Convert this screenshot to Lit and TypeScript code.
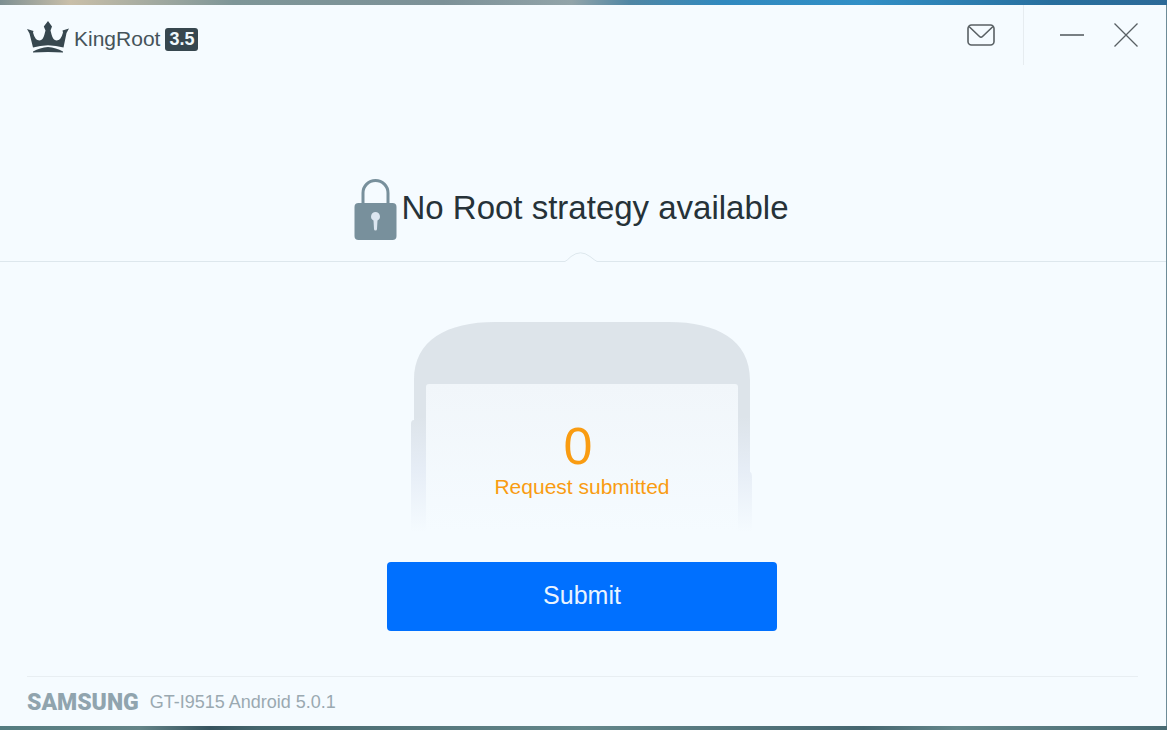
import { LitElement, html, css } from "lit";
import { customElement, property, state } from "lit/decorators.js";

@customElement("title-bar")
class TitleBar extends LitElement {
  @property() version = "";

  static styles = css`
    :host {
      display: flex;
      justify-content: space-between;
      align-items: flex-start;
      padding-left: 27px;
    }
    .brand {
      display: flex;
      align-items: center;
      gap: 5px;
      padding-top: 16px;
      color: #45535a;
      font-size: 21px;
      line-height: 36px;
    }
    .badge {
      width: 33px;
      border-radius: 3px;
      background: #37474f;
      color: #f0f8fc;
      font-size: 18px;
      font-weight: bold;
      line-height: 23px;
      text-align: center;
    }
    .controls {
      display: flex;
      height: 60px;
      padding-right: 20px;
    }
    .group {
      display: flex;
      gap: 14px;
    }
    .group + .group {
      border-left: 1px solid #e6ecf0;
      padding-left: 28px;
      margin-left: 22px;
    }
    button {
      display: grid;
      place-items: center;
      width: 40px;
      height: 60px;
      padding: 0;
      border: 0;
      background: none;
    }
    svg {
      display: block;
      fill: none;
      stroke: #596064;
    }
    .crown {
      fill: #37474f;
      stroke: none;
    }
  `;

  render() {
    return html`
      <div class="brand">
        <svg class="crown" width="42" height="36" viewBox="0 0 42 36" aria-hidden="true">
          <path d="M0 8 L6.500 10 L6 11.500 Q8 19.500 12.500 19.500 Q16 19 17.300 14 L18.500 9.500 L16.800 5.500 L21 0 L25 5.500 L23.500 9.500 L24.700 14 Q26 19 29.500 19.500 Q34 19.500 36 11.500 L35.500 9.500 L42 7.500 L39.500 12 L36.500 26.500 Q29 24.500 21 24.300 Q13 24.500 6 26.500 L2.500 12.500 Z"/>
          <path d="M6 31.500 L6 30.500 Q13 26.500 21 26 Q29 26.500 36 30.500 L36 31.500 Q21 30.500 6 31.500 Z"/>
        </svg>
        <span>KingRoot</span>
        <span class="badge">${this.version}</span>
      </div>
      <div class="controls">
        <div class="group">
          <button aria-label="Messages">
            <svg width="28" height="22" viewBox="0 0 28 22" stroke-width="1.6">
              <rect x="1" y="1" width="26" height="20" rx="3.500"/>
              <path d="M2 2.500 L12.500 12.500 Q14 14 15.500 12.500 L26 2.500"/>
            </svg>
          </button>
        </div>
        <div class="group">
          <button aria-label="Minimize">
            <svg width="26" height="26" viewBox="0 0 26 26" stroke-width="1.6"><path d="M1 13 H25"/></svg>
          </button>
          <button aria-label="Close">
            <svg width="26" height="26" viewBox="0 0 26 26" stroke-width="1.3"><path d="M1.500 1.500 L24.500 24.500 M24.500 1.500 L1.500 24.500"/></svg>
          </button>
        </div>
      </div>
    `;
  }
}

@customElement("root-status")
class RootStatus extends LitElement {
  @property() message = "";

  static styles = css`
    :host {
      display: block;
    }
    .headline {
      display: flex;
      justify-content: center;
      align-items: center;
      gap: 4px;
      padding: 114px 23px 12px 0;
    }
    h1 {
      margin: 0;
      padding-bottom: 4px;
      color: #263238;
      font-size: 33px;
      font-weight: normal;
      line-height: 40px;
    }
    .divider {
      display: flex;
    }
    .divider::before,
    .divider::after {
      content: "";
      flex: 1;
      border-bottom: 1px solid #dde7ed;
    }
    svg {
      display: block;
    }
  `;

  render() {
    return html`
      <div class="headline">
        <svg width="43" height="61" viewBox="0 0 43 61" aria-hidden="true">
          <path d="M9 26 V14 A12.500 12.500 0 0 1 34 14 V26" fill="none" stroke="#78909c" stroke-width="3"/>
          <rect x="0.500" y="24" width="42" height="37" rx="4" fill="#78909c"/>
          <path d="M21.500 33 a4.500 4.500 0 0 1 2 8.500 L23 50 a1.500 1.500 0 0 1 -3 0 L19.500 41.500 a4.500 4.500 0 0 1 2 -8.500 Z" fill="#dce6f0"/>
        </svg>
        <h1>${this.message}</h1>
      </div>
      <div class="divider">
        <svg width="38" height="10" viewBox="0 0 38 10" fill="none" stroke="#dde7ed" aria-hidden="true">
          <path d="M0 9.500 H1 Q3 8.500 7 4.500 Q12 0.800 16.500 0.800 Q21 0.800 26 4.500 Q31 8.500 33 9.500 H38"/>
        </svg>
      </div>
    `;
  }
}

@customElement("request-panel")
class RequestPanel extends LitElement {
  @state() private submitted = 0;

  static styles = css`
    :host {
      display: flex;
      flex-direction: column;
      align-items: center;
      gap: 30px;
      padding: 60px 2px 45px 0;
    }
    .phone {
      display: grid;
      justify-items: center;
    }
    .phone > * {
      grid-area: 1 / 1;
    }
    .counter {
      display: flex;
      flex-direction: column;
      align-items: center;
      padding-top: 97px;
      color: #f99c12;
      font-size: 21px;
      line-height: 28px;
    }
    .number {
      padding-right: 8px;
      font-size: 52px;
      line-height: 54px;
    }
    .submit {
      width: 390px;
      max-width: 100%;
      height: 69px;
      padding: 0 0 2px;
      border: 0;
      border-radius: 4px;
      background: #0070ff;
      color: #e9f4ff;
      font: 25px "Liberation Sans", Arial, sans-serif;
    }
  `;

  render() {
    return html`
      <div class="phone">
        <svg width="342" height="210" viewBox="0 0 342 210" aria-hidden="true">
          <defs>
            <linearGradient id="body" gradientUnits="userSpaceOnUse" x1="0" y1="0" x2="0" y2="210">
              <stop offset="0" stop-color="#dde4ea"/>
              <stop offset="0.450" stop-color="#dde4ea"/>
              <stop offset="0.700" stop-color="#e6edf6"/>
              <stop offset="1" stop-color="#f5fbff"/>
            </linearGradient>
            <linearGradient id="screen" x1="0" y1="0" x2="0" y2="1">
              <stop offset="0" stop-color="#f1f6fa"/>
              <stop offset="1" stop-color="#f5fbff"/>
            </linearGradient>
          </defs>
          <path fill="url(#body)" d="M0 210 V102 Q0 98 3 98 V58 C3 18 36 0 84 0 H258 C306 0 339 18 339 58 V150 Q341 150 341 156 V210 Z"/>
          <path fill="url(#screen)" d="M15 210 V65 Q15 62 18 62 H324 Q327 62 327 65 V210 Z"/>
        </svg>
        <div class="counter" role="status">
          <span class="number">${this.submitted}</span>
          <span>Request submitted</span>
        </div>
      </div>
      <button class="submit" @click=${() => this.submitted++}>Submit</button>
    `;
  }
}

@customElement("device-footer")
class DeviceFooter extends LitElement {
  @property() brand = "";
  @property() model = "";

  static styles = css`
    :host {
      display: flex;
      align-items: center;
      gap: 11px;
      margin: 0 28px 0 27px;
      border-top: 1px solid #e8eef2;
      padding-top: 2px;
      color: #9aa9b1;
      font-size: 18px;
      line-height: 47px;
    }
    .maker {
      color: #90a4ae;
      font-family: Roboto, "Liberation Sans", sans-serif;
      font-size: 23px;
      font-weight: 900;
    }
  `;

  render() {
    return html`<span class="maker">${this.brand}</span><span>${this.model}</span>`;
  }
}

@customElement("app-root")
class AppRoot extends LitElement {
  static styles = css`
    :host {
      display: flex;
      box-sizing: border-box;
      min-height: 100vh;
      padding: 5px 1px 4px 0;
      background:
        linear-gradient(90deg, #7d8f92, #c9bfa9 6%, #7e9698 20%, #7c9198 38%, #92a4a9 49%, #4f86a4 54%, #3089bf 62%, #318fc6 74%, #286f9e 90%, #2c6a98) top / 100% 5px no-repeat,
        linear-gradient(90deg, #547c80, #648488 12%, #36535e 18%, #45666d 22%, #64878b 50%, #456670 74%, #64878b 82%, #486a72) bottom / 100% 4px no-repeat,
        #6d8c98;
      font-family: "Liberation Sans", Arial, sans-serif;
    }
    .window {
      display: flex;
      flex: 1;
      flex-direction: column;
      min-width: 0;
      background: #f5fbff;
    }
    .main {
      flex: 1;
    }
  `;

  render() {
    return html`
      <div class="window">
        <title-bar version="3.5"></title-bar>
        <main class="main">
          <root-status message="No Root strategy available"></root-status>
          <request-panel></request-panel>
        </main>
        <device-footer brand="SAMSUNG" model="GT-I9515 Android 5.0.1"></device-footer>
      </div>
    `;
  }
}
